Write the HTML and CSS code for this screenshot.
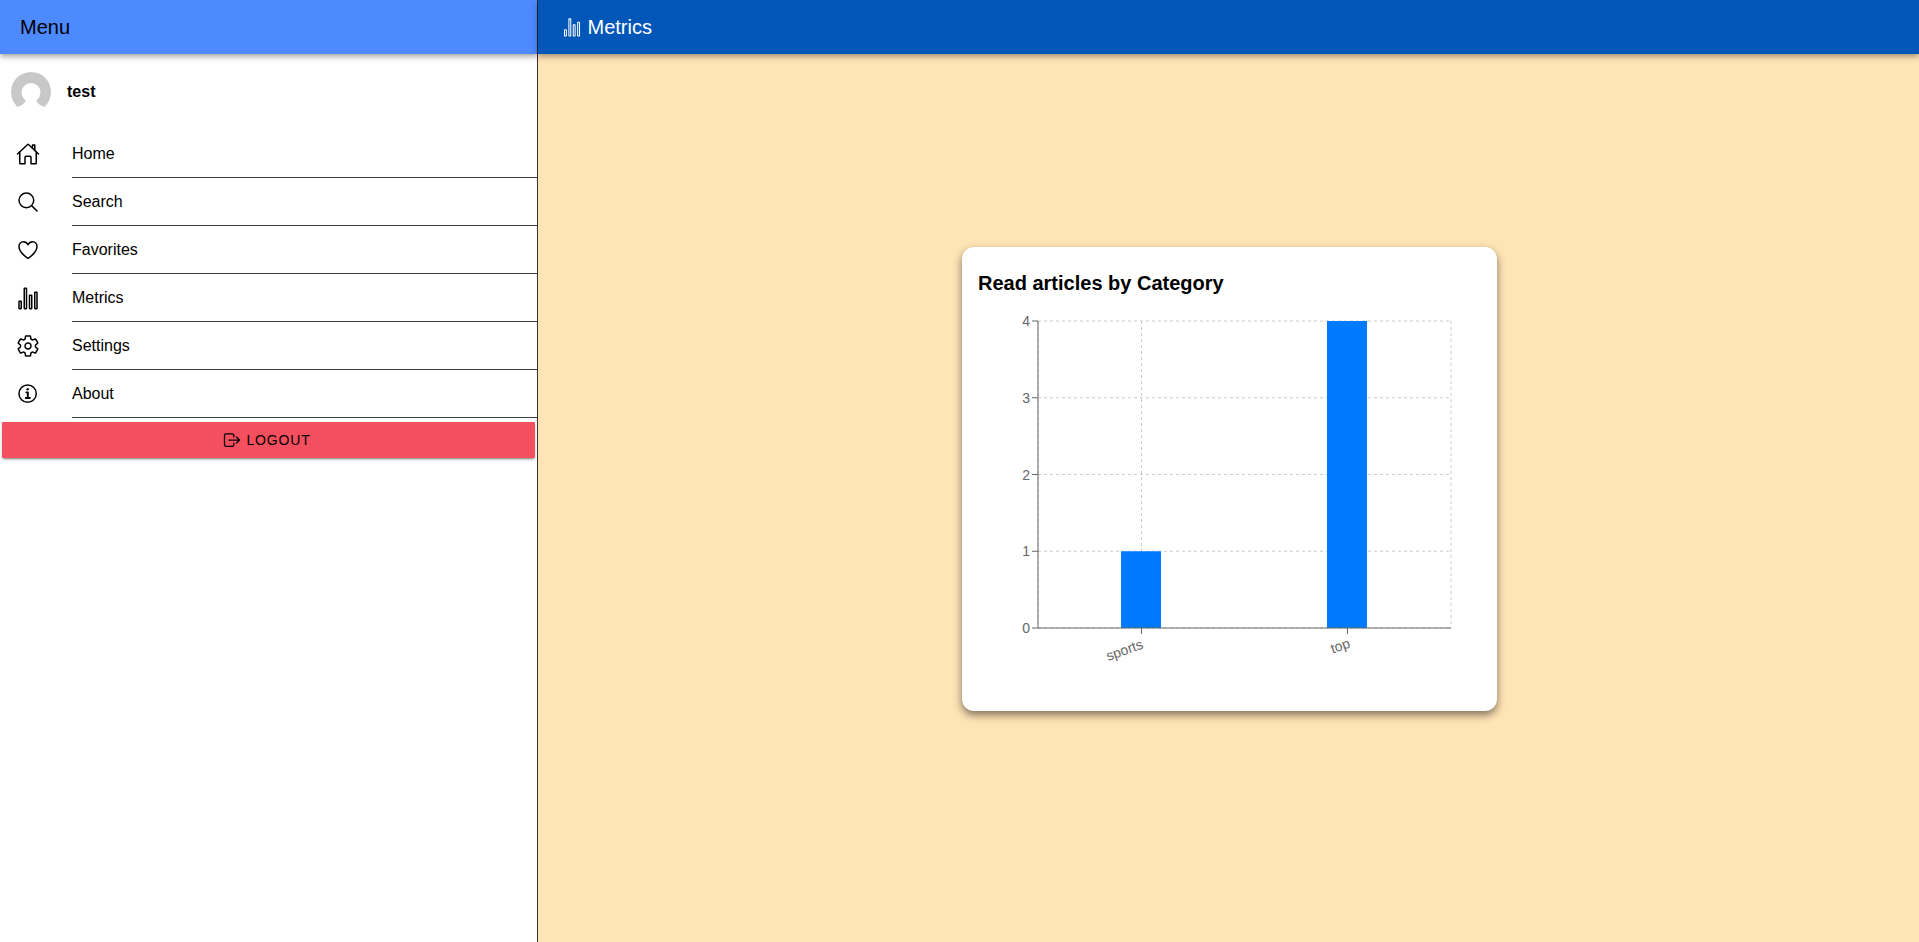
FILE: index.html
```html
<!DOCTYPE html>
<html lang="en">
<head>
<meta charset="utf-8">
<title>Metrics</title>
<link rel="stylesheet" href="styles.css">
</head>
<body>
<div class="app">
  <aside class="sidebar">
    <header class="bar bar-menu">Menu</header>
    <div class="profile">
      <svg class="avatar" viewBox="0 0 40 40"><circle class="avatar-bg" cx="20" cy="20" r="20"/><circle class="avatar-fg" cx="20" cy="20.5" r="9.5"/><path class="avatar-fg" d="M4 40L6 35Q14 33 16 26L24 26Q26 33 34 35L36 40Z"/></svg>
      <strong class="profile-name">test</strong>
    </div>
    <nav class="nav">
      <a class="nav-item"><svg class="icon" viewBox="0 0 512 512"><path d="M80 212v236a16 16 0 0016 16h96V328a24 24 0 0124-24h80a24 24 0 0124 24v136h96a16 16 0 0016-16V212"/><path d="M480 256L266.89 52c-5-5.06-13.21-5.06-18.77 0L32 256"/><path d="M400 179V64h-48v69"/></svg><span class="nav-label">Home</span></a>
      <a class="nav-item"><svg class="icon" viewBox="0 0 512 512"><path d="M221.09 64a157.09 157.09 0 10157.09 157.09A157.1 157.1 0 00221.09 64z"/><path d="M338.29 338.29L448 448"/></svg><span class="nav-label">Search</span></a>
      <a class="nav-item"><svg class="icon" viewBox="0 0 512 512"><path d="M352.92 80C288 80 256 144 256 144s-32-64-96.92-64c-52.76 0-94.54 44.14-95.08 96.81-1.1 109.33 86.73 187.08 183 252.42a16 16 0 0018 0c96.26-65.34 184.09-143.09 183-252.42-.54-52.67-42.32-96.81-95.08-96.81z"/></svg><span class="nav-label">Favorites</span></a>
      <a class="nav-item"><svg class="icon" viewBox="0 0 512 512"><rect x="64" y="325" width="48" height="160" rx="8"/><rect x="176" y="48" width="48" height="437" rx="8"/><rect x="288" y="197" width="48" height="288" rx="8"/><rect x="400" y="133" width="48" height="352" rx="8"/></svg><span class="nav-label">Metrics</span></a>
      <a class="nav-item"><svg class="icon" viewBox="0 0 512 512"><path d="M262.29 192.31a64 64 0 1057.4 57.4 64.13 64.13 0 00-57.4-57.4zM416.39 256a154.34 154.34 0 01-1.53 20.79l45.21 35.46a10.81 10.81 0 012.45 13.75l-42.77 74a10.81 10.81 0 01-13.14 4.59l-44.9-18.08a16.11 16.11 0 00-15.17 1.75A164.48 164.48 0 01325 400.8a15.94 15.94 0 00-8.82 12.14l-6.73 47.89a11.08 11.08 0 01-10.68 9.17h-85.54a11.11 11.11 0 01-10.69-8.87l-6.72-47.82a16.07 16.07 0 00-9-12.22 155.3 155.3 0 01-21.46-12.57 16 16 0 00-15.11-1.71l-44.89 18.07a10.81 10.81 0 01-13.14-4.58l-42.77-74a10.8 10.8 0 012.45-13.75l38.21-30a16.05 16.05 0 006-14.08c-.36-4.17-.58-8.33-.58-12.5s.21-8.27.58-12.35a16 16 0 00-6.07-13.94l-38.19-30A10.81 10.81 0 0149.48 186l42.77-74a10.81 10.81 0 0113.14-4.59l44.9 18.08a16.11 16.11 0 0015.17-1.75A164.48 164.48 0 01187 111.2a15.94 15.94 0 008.82-12.14l6.73-47.89A11.08 11.08 0 01213.23 42h85.54a11.11 11.11 0 0110.69 8.87l6.72 47.82a16.07 16.07 0 009 12.22 155.3 155.3 0 0121.46 12.57 16 16 0 0015.11 1.71l44.89-18.07a10.81 10.81 0 0113.14 4.58l42.77 74a10.8 10.8 0 01-2.45 13.75l-38.21 30a16.05 16.05 0 00-6.05 14.08c.33 4.14.55 8.3.55 12.47z"/></svg><span class="nav-label">Settings</span></a>
      <a class="nav-item"><svg class="icon" viewBox="0 0 512 512"><path d="M248 64C146.39 64 64 146.39 64 248s82.39 184 184 184 184-82.39 184-184S349.61 64 248 64z"/><path class="thick" d="M220 220h32v116M208 340h88"/><path class="solid" d="M248 130a26 26 0 1026 26 26 26 0 00-26-26z"/></svg><span class="nav-label">About</span></a>
    </nav>
    <button class="logout" type="button"><svg class="icon icon-logout" viewBox="0 0 512 512"><path d="M304 336v40a40 40 0 01-40 40H104a40 40 0 01-40-40V136a40 40 0 0140-40h152c22.09 0 48 17.91 48 40v40M368 336l80-80-80-80M176 256h256"/></svg>Logout</button>
  </aside>
  <div class="content">
    <header class="bar bar-page">
      <svg class="icon icon-page" viewBox="0 0 512 512"><rect x="64" y="325" width="48" height="160" rx="8"/><rect x="176" y="48" width="48" height="437" rx="8"/><rect x="288" y="197" width="48" height="288" rx="8"/><rect x="400" y="133" width="48" height="352" rx="8"/></svg>
      Metrics
    </header>
    <main class="stage">
      <section class="card">
        <h2 class="card-title">Read articles by Category</h2>
        <svg class="chart" width="503" height="400" viewBox="0 0 503 400">
          <g class="grid">
            <path d="M60 26H473M60 102.75H473M60 179.5H473M60 256.25H473M60 333H473"/>
            <path d="M163.5 26V333M473 26V333M60 26V333"/>
          </g>
          <rect class="bar-fill" x="143" y="256.25" width="40" height="76.75"/>
          <rect class="bar-fill" x="349" y="26" width="40" height="307"/>
          <g class="axis">
            <path d="M60 26V333H473"/>
            <path d="M54 26H60M54 102.75H60M54 179.5H60M54 256.25H60M54 333H60M163.5 333V339M369.5 333V339"/>
          </g>
          <g class="tick-text">
            <text class="tick-y" x="52" y="31">4</text>
            <text class="tick-y" x="52" y="108">3</text>
            <text class="tick-y" x="52" y="185">2</text>
            <text class="tick-y" x="52" y="261">1</text>
            <text class="tick-y" x="52" y="338">0</text>
            <text class="tick-y" x="166" y="353" transform="rotate(-20 166 353)">sports</text>
            <text class="tick-y" x="373" y="352" transform="rotate(-20 373 352)">top</text>
          </g>
        </svg>
      </section>
    </main>
  </div>
</div>
</body>
</html>
```
FILE: styles.css
```css
* { box-sizing: border-box; }

html, body {
  margin: 0;
  height: 100%;
  overflow: hidden;
}

body {
  font-family: "Liberation Sans", Arial, sans-serif;
  font-size: 16px;
  color: #000;
  background: #fff;
}

.app {
  display: flex;
  height: 100vh;
}

.sidebar {
  width: 538px;
  flex: none;
  border-right: 1px solid #333;
  background: #fff;
}

.bar {
  height: 54px;
  display: flex;
  align-items: center;
  font-size: 20px;
  position: relative;
  z-index: 2;
  box-shadow: 0 2px 4px -1px rgba(0, 0, 0, .2), 0 4px 5px 0 rgba(0, 0, 0, .14), 0 1px 10px 0 rgba(0, 0, 0, .12);
}

.bar-menu {
  background: #4d8aff;
  padding-left: 20px;
}

.bar-page {
  background: #0057b8;
  color: #fff;
  padding-left: 24px;
  gap: 5.5px;
}

.profile {
  height: 76px;
  display: flex;
  align-items: center;
  gap: 16px;
  padding-left: 11px;
}

.avatar {
  width: 40px;
  height: 40px;
  display: block;
}

.avatar-bg { fill: #c8c8c8; }
.avatar-fg { fill: #fff; }

.profile-name {
  font-weight: 700;
}

.nav-item {
  display: flex;
  align-items: center;
  padding-left: 16px;
  height: 48px;
}

.nav-label {
  flex: 1;
  align-self: stretch;
  display: flex;
  align-items: center;
  border-bottom: 1px solid #404040;
}

.icon {
  width: 24px;
  height: 24px;
  flex: none;
  margin-right: 32px;
  fill: none;
  stroke: #000;
  stroke-width: 32;
  stroke-linecap: round;
  stroke-linejoin: round;
}

.icon .thick { stroke-width: 40; }
.icon .solid { fill: #000; stroke: none; }

.logout {
  display: flex;
  align-items: center;
  justify-content: center;
  width: 533px;
  height: 36px;
  margin: 4px 2px 0;
  padding: 0;
  border: 0;
  border-radius: 1px;
  background: #f44f5e;
  color: #000;
  font: 14px "Liberation Sans", Arial, sans-serif;
  letter-spacing: .84px;
  text-transform: uppercase;
  box-shadow: 0 3px 1px -2px rgba(0, 0, 0, .2), 0 2px 2px 0 rgba(0, 0, 0, .14), 0 1px 5px 0 rgba(0, 0, 0, .12);
}

.icon-logout {
  width: 20px;
  height: 20px;
  margin: 0 4px 0 -4px;
}

.content {
  flex: 1;
  display: flex;
  flex-direction: column;
  min-width: 0;
}

.icon-page {
  width: 20px;
  height: 20px;
  margin-right: 0;
  stroke: #fff;
  stroke-width: 26;
}

.stage {
  flex: 1;
  background: #ffe4b5;
  display: flex;
  align-items: center;
  justify-content: center;
  padding-bottom: 38px;
  padding-left: 2px;
}

.card {
  width: 535px;
  height: 464px;
  padding: 16px;
  background: #fff;
  border-radius: 12px;
  box-shadow: 0 4px 8px rgba(0, 0, 0, .5);
}

.card-title {
  margin: 0;
  height: 32px;
  padding-top: 8px;
  font-size: 20px;
  line-height: 24px;
  font-weight: 700;
}

.chart {
  display: block;
}

.grid path {
  fill: none;
  stroke: #ccc;
  stroke-dasharray: 3 3;
}

.bar-fill { fill: #007bff; }

.axis path {
  fill: none;
  stroke: #666;
}

.tick-text {
  font-size: 14px;
  fill: #666;
}

.tick-y { text-anchor: end; }
```
